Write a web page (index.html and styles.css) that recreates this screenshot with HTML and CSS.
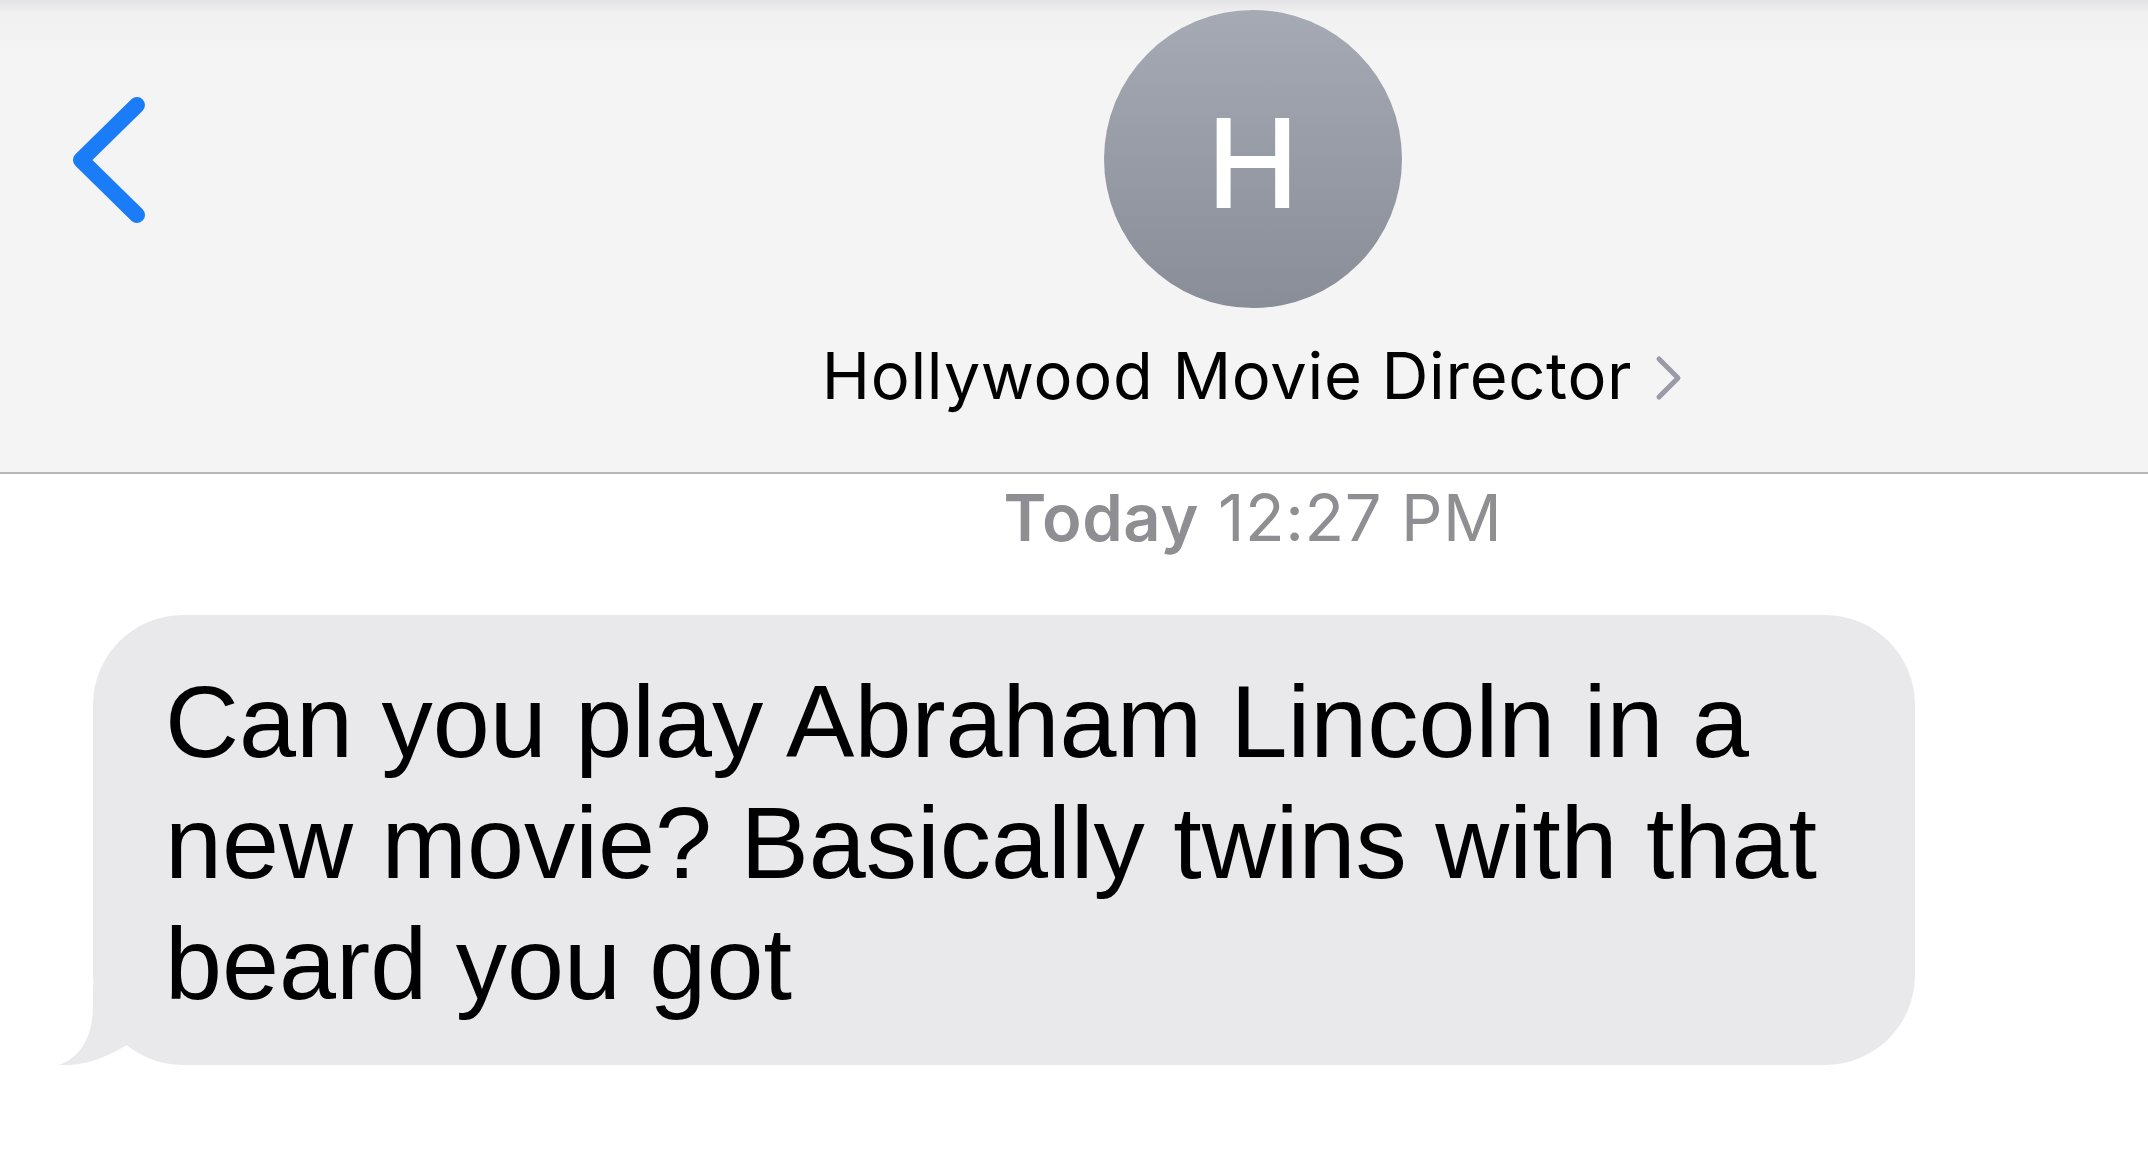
FILE: index.html
```html
<!DOCTYPE html>
<html lang="en">
<head>
  <meta charset="UTF-8">
  <meta name="viewport" content="width=device-width, initial-scale=1.0">
  <title>Messages</title>
  <link rel="stylesheet" href="styles.css">
</head>
<body>
  <!-- Conversation header -->
  <header class="nav-bar">
    <a class="back" href="#" aria-label="Back">
      <svg width="90" height="140" viewBox="0 0 90 140">
        <polyline points="77,15 21,70 77,125" fill="none" stroke="#1a7cf6" stroke-width="16" stroke-linecap="round" stroke-linejoin="round"/>
      </svg>
    </a>
    <div class="contact">
      <div class="avatar">H</div>
      <div class="contact-name">
        <span>Hollywood Movie Director</span>
        <svg width="30" height="48" viewBox="0 0 30 48">
          <polyline points="5,5 24,24 5,43" fill="none" stroke="#9a9ba6" stroke-width="5" stroke-linecap="round" stroke-linejoin="round"/>
        </svg>
      </div>
    </div>
  </header>

  <!-- Messages -->
  <main class="thread">
    <div class="timestamp"><strong>Today</strong> 12:27 PM</div>
    <div class="bubble received">
      Can you play Abraham Lincoln in a new movie? Basically twins with that beard you got
      <svg class="tail" width="80" height="80" viewBox="0 0 80 80">
        <path d="M35,0 L35,20 C35,55 20,74 0,80 C25,82 50,72 72,58 L80,0 Z" fill="#e9e9eb"/>
      </svg>
    </div>
  </main>
</body>
</html>
```

FILE: styles.css
```css
/* Basic page setup */
body {
  margin: 0;
  padding: 0;
  background-color: #fff;
  font-family: Inter, "Liberation Sans", sans-serif;
  overflow: hidden;
}

/* Header */
.nav-bar {
  display: grid;
  grid-template-columns: 358px 1fr;
  height: 472px;
  background: linear-gradient(#e2e2e4 0px, #f1f1f2 14px, #f4f4f4 60px, #f4f4f4 100%);
  border-bottom: 2px solid #b5b5b7;
}
.back {
  display: block;
  align-self: start;
  width: 90px;
  height: 140px;
  margin: 90px 0 0 60px;
}
.contact {
  display: flex;
  flex-direction: column;
  align-items: center;
  padding-top: 10px;
}
.avatar {
  width: 298px;
  height: 298px;
  border-radius: 50%;
  background: linear-gradient(#a6aab4, #898d98);
  display: flex;
  align-items: center;
  justify-content: center;
  color: #fff;
  font-size: 124px;
  font-weight: 500;
  line-height: 1;
  padding-top: 8px;
  box-sizing: border-box;
}
.contact-name {
  display: flex;
  align-items: center;
  gap: 22px;
  margin-top: 28px;
  font-size: 65px;
  letter-spacing: 0.7px;
  line-height: 80px;
  color: #000;
}
.contact-name svg {
  margin-top: 4px;
}

/* Thread */
.thread {
  padding: 0 0 0 93px;
}
.timestamp {
  margin-top: 4px;
  padding-left: 265px;
  text-align: center;
  font-size: 65px;
  letter-spacing: 0.6px;
  line-height: 80px;
  color: #8e8e93;
}
.timestamp strong {
  font-weight: 600;
}
.bubble {
  position: relative;
  box-sizing: border-box;
  width: 1822px;
  margin-top: 57px;
  padding: 46px 70px 41px 72px;
  border-radius: 90px;
  font-family: "Liberation Sans", Arial, sans-serif;
  font-size: 102.5px;
  line-height: 121px;
  color: #000;
}
.received {
  background-color: #e9e9eb;
}
.tail {
  position: absolute;
  left: -35px;
  bottom: 0;
}
```
